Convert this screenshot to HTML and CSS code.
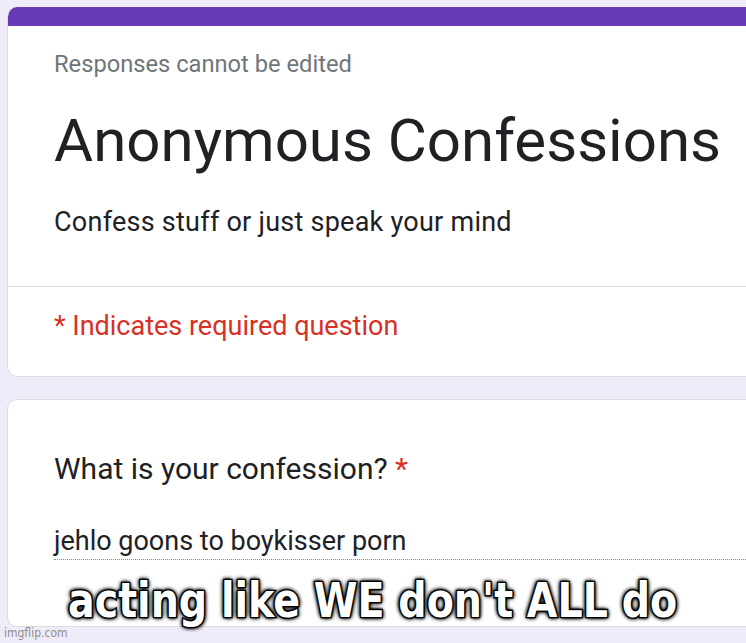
FILE: index.html
```html
<!DOCTYPE html>
<html>
<head>
<meta charset="utf-8">
<link rel="stylesheet" href="styles.css">
</head>
<body>
<div class="page">
  <div class="card header-card">
    <div class="band"></div>
    <div class="header-main">
      <div class="note">Responses cannot be edited</div>
      <h1 class="title">Anonymous Confessions</h1>
      <div class="desc">Confess stuff or just speak your mind</div>
    </div>
    <div class="required">* Indicates required question</div>
  </div>
  <div class="card question-card">
    <div class="question">What is your confession? <span class="star">*</span></div>
    <div class="answer">jehlo goons to boykisser porn</div>
  </div>
</div>
<div class="caption">acting like WE don't ALL do</div>
<div class="watermark">imgflip.com</div>
</body>
</html>
```
FILE: styles.css
```css
html, body {
  margin: 0;
  padding: 0;
}
body {
  background: #f0ebf8;
  width: 746px;
  height: 643px;
  overflow: hidden;
  position: relative;
  font-family: Roboto, "Liberation Sans", sans-serif;
}
.page {
  padding: 7px 0 0 7px;
  display: flex;
  flex-direction: column;
  gap: 22px;
  width: 739px;
  overflow: hidden;
}
.card {
  width: 780px;
  flex: none;
  background: #fff;
  border: 1px solid #dadce0;
  border-radius: 10px;
  box-sizing: border-box;
}
.header-card {
  border-top: none;
  overflow: hidden;
  height: 370px;
}
.band {
  height: 19px;
  background: #673ab7;
}
.header-main {
  padding: 24px 0 0 46px;
  height: 261px;
  box-sizing: border-box;
  border-bottom: 1px solid #dadce0;
}
.note {
  font-size: 23.7px;
  line-height: 28px;
  color: #70757a;
}
.title {
  margin: 28px 0 0 0;
  font-size: 60px;
  font-weight: 400;
  line-height: 70px;
  color: #202124;
}
.desc {
  margin-top: 32px;
  font-size: 27px;
  letter-spacing: 0.25px;
  line-height: 28px;
  color: #202124;
}
.required {
  padding: 25px 0 0 46px;
  font-size: 27px;
  line-height: 28px;
  color: #d93025;
}
.question-card {
  height: 228px;
  padding: 54px 0 0 46px;
}
.question {
  font-size: 30px;
  line-height: 30px;
  color: #202124;
}
.star {
  color: #d93025;
}
.answer {
  margin-top: 42px;
  font-size: 27px;
  line-height: 30px;
  color: #202124;
  padding-bottom: 3px;
  border-bottom: 1px dotted #8a8a8a;
}
.caption {
  position: absolute;
  left: 68px;
  top: 577px;
  font-family: "DejaVu Sans Condensed", "DejaVu Sans", sans-serif;
  font-weight: bold;
  font-size: 44px;
  line-height: 50px;
  color: #fff;
  transform: scaleY(1.1);
  transform-origin: center 40px;
  text-shadow: 0 0 2px #000, 0 0 3px #000, 0 0 5px #000, 1px 1px 4px #000, -1px -1px 4px #000;
  -webkit-text-stroke: 2.5px #000;
  paint-order: stroke fill;
  white-space: nowrap;
}
.watermark {
  position: absolute;
  left: 4px;
  top: 626px;
  font-family: "Liberation Sans Narrow", "DejaVu Sans Condensed", sans-serif;
  font-size: 12px;
  color: #8d8d8d;
}
```
